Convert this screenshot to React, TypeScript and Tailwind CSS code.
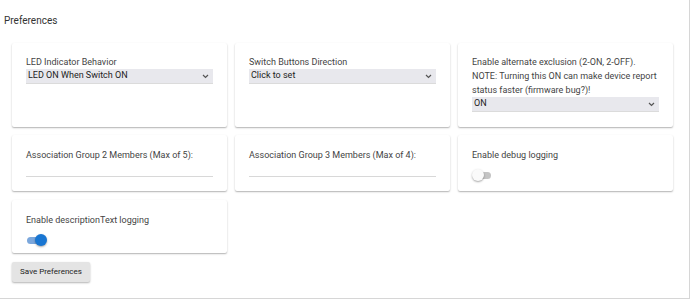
import React from 'react';

const font = { fontFamily: 'Roboto, "Liberation Sans", sans-serif' };

function Card({ children, className = '' }: { children: React.ReactNode; className?: string }) {
  return (
    <div
      className={`bg-white rounded-[2px] shadow-[0_1px_2px_rgba(0,0,0,0.22),0_1px_1px_rgba(0,0,0,0.1)] px-[14px] ${className}`}
    >
      {children}
    </div>
  );
}

function Label({ children }: { children: React.ReactNode }) {
  return <div className="text-[9px] leading-[14px] text-[#444]">{children}</div>;
}

function Select({ value }: { value: string }) {
  return (
    <div className="h-[14px] bg-[#e8e8ed] shadow-[0_1px_0_rgba(0,0,0,0.14)] flex items-center justify-between pl-[2px] pr-[4px] text-[9px] text-[#222]">
      <span>{value}</span>
      <svg width="7" height="5" viewBox="0 0 7 5" fill="none">
        <path d="M1 1l2.5 2.5L6 1" stroke="#555" strokeWidth="1.2" />
      </svg>
    </div>
  );
}

function Toggle({ on }: { on: boolean }) {
  return (
    <div className="relative w-[22px] h-[12px]">
      <div
        className={`absolute top-[2.5px] left-[1px] h-[7px] w-[18px] rounded-full ${
          on ? 'bg-[#7ba7dc]' : 'bg-[#c4c4c4]'
        }`}
      />
      <div
        className={`absolute top-0 w-[12px] h-[12px] rounded-full shadow-[0_1px_2px_rgba(0,0,0,0.35)] ${
          on ? 'left-[9px] bg-[#1976d2]' : 'left-0 bg-[#fafafa]'
        }`}
      />
    </div>
  );
}

export default function App() {
  return (
    <div style={font} className="w-[690px] h-[304px] bg-white relative overflow-hidden">
      <div className="border-r border-b border-[#d6d6d6] h-[299px] w-[690px] pl-[4px] pt-[13px]">
        <h2 className="text-[10px] text-[#333] leading-[15px]">Preferences</h2>

        <div className="ml-[8px] mt-[15px] grid grid-cols-[215px_215px_215px] gap-x-[8px]">
          <Card className="h-[84px] pt-[12px]">
            <Label>LED Indicator Behavior</Label>
            <Select value="LED ON When Switch ON" />
          </Card>
          <Card className="h-[84px] pt-[12px]">
            <Label>Switch Buttons Direction</Label>
            <Select value="Click to set" />
          </Card>
          <Card className="h-[84px] pt-[12px]">
            <Label>
              Enable alternate exclusion (2-ON, 2-OFF).
              <br />
              NOTE: Turning this ON can make device report
              <br />
              status faster (firmware bug?)!
            </Label>
            <Select value="ON" />
          </Card>
        </div>

        <div className="ml-[8px] mt-[8px] grid grid-cols-[215px_215px_215px] gap-x-[8px]">
          <Card className="h-[56px] pt-[13px]">
            <Label>Association Group 2 Members (Max of 5):</Label>
            <div className="mt-[14px] h-[1px] bg-[#d8d8d8]" />
          </Card>
          <Card className="h-[56px] pt-[13px]">
            <Label>Association Group 3 Members (Max of 4):</Label>
            <div className="mt-[14px] h-[1px] bg-[#d8d8d8]" />
          </Card>
          <Card className="h-[56px] pt-[13px]">
            <Label>Enable debug logging</Label>
            <div className="mt-[7px]">
              <Toggle on={false} />
            </div>
          </Card>
        </div>

        <div className="ml-[8px] mt-[9px] grid grid-cols-[215px_215px_215px] gap-x-[8px]">
          <Card className="h-[53px] pt-[13px]">
            <Label>Enable descriptionText logging</Label>
            <div className="mt-[7px]">
              <Toggle on={true} />
            </div>
          </Card>
        </div>

        <button className="ml-[8px] mt-[9px] h-[20px] w-[78px] rounded-[2px] bg-[#e4e4e4] shadow-[0_1px_2px_rgba(0,0,0,0.3)] text-[8px] text-[#222] flex items-center justify-center">
          Save Preferences
        </button>
      </div>
    </div>
  );
}
